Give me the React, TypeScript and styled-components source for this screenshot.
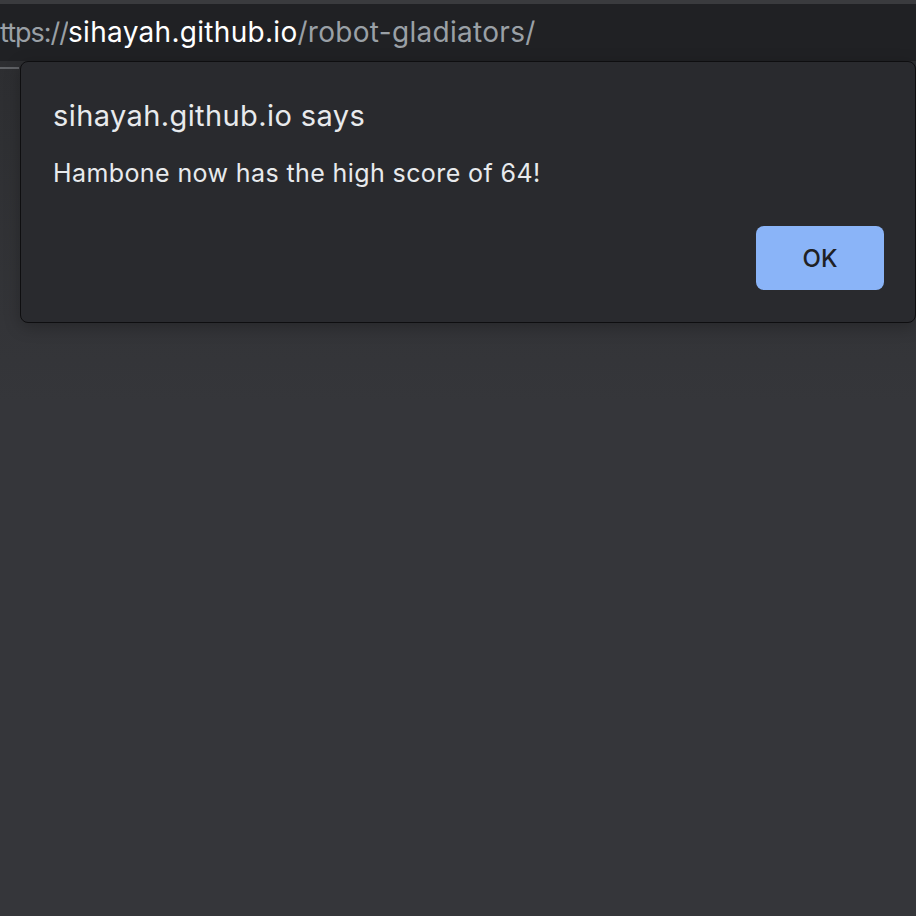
import React from 'react'
import styled, { createGlobalStyle } from 'styled-components';

const GlobalStyle = createGlobalStyle`
    html, body {
        margin: 0;
        padding: 0;
        background: #35363a;
    }
    body {
        font-family: Inter, "Noto Sans", "Liberation Sans", sans-serif;
    }
`;

const App = () => {
    return (
        <>
            <GlobalStyle />
            <Window>
                <TopStrip />
                <AddressBar>
                    <Scheme>
                        <span>https://</span>
                    </Scheme>
                    <Host>sihayah.github.io</Host>
                    <Path>/robot-gladiators/</Path>
                </AddressBar>
                <Content>
                    <TabLine />
                </Content>
                <Dialog>
                    <Title>sihayah.github.io says</Title>
                    <Message>Hambone now has the high score of 64!</Message>
                    <DialogFooter>
                        <OkButton>OK</OkButton>
                    </DialogFooter>
                </Dialog>
            </Window>
        </>
    )
}

export default App;

const Window = styled.div`
    position: relative;
    width: 916px;
    height: 916px;
    overflow: hidden;
    display: flex;
    flex-direction: column;
    background: #35363a;
`;

const TopStrip = styled.div`
    height: 4px;
    background: #3a3b3e;
`;

const AddressBar = styled.div`
    height: 57px;
    background: #202124;
    display: flex;
    align-items: center;
    overflow: hidden;
    font-size: 28px;
    letter-spacing: 0.3px;
    white-space: nowrap;
    padding-bottom: 2px;
    box-sizing: border-box;
`;

const Scheme = styled.div`
    width: 68px;
    flex: none;
    display: flex;
    justify-content: flex-end;
    overflow: hidden;
    color: #9aa0a6;
    font-size: 27px;
    letter-spacing: -1px;
    padding-top: 1px;
`;

const Host = styled.span`
    color: #ffffff;
`;

const Path = styled.span`
    color: #9aa0a6;
`;

const Content = styled.div`
    flex: 1;
    background: linear-gradient(180deg, #2d2e31 0%, #35363a 40%, #35363a 100%);
`;

const TabLine = styled.div`
    margin-top: 6px;
    width: 19px;
    height: 2px;
    background: #5f6165;
`;

const Dialog = styled.div`
    position: absolute;
    top: 61px;
    left: 20px;
    width: 896px;
    height: 262px;
    box-sizing: border-box;
    padding: 35px 31px 0 32px;
    background: #292a2e;
    border: 1px solid #0e0e10;
    border-radius: 8px;
    box-shadow: 0 4px 16px rgba(0, 0, 0, 0.25);
    display: flex;
    flex-direction: column;
`;

const Title = styled.h2`
    margin: 0;
    font-size: 29px;
    letter-spacing: 0.4px;
    font-weight: 400;
    color: #e8eaed;
    line-height: 38px;
`;

const Message = styled.p`
    margin: 23px 0 0 0;
    font-size: 25px;
    letter-spacing: 0.4px;
    color: #e8eaed;
    line-height: 30px;
`;

const DialogFooter = styled.div`
    display: flex;
    justify-content: flex-end;
    margin-top: 38px;
`;

const OkButton = styled.button`
    width: 128px;
    height: 64px;
    background: #8ab4f8;
    color: #202124;
    border: none;
    border-radius: 8px;
    font-family: Inter, "Noto Sans", sans-serif;
    font-size: 24px;
    font-weight: 500;
    cursor: pointer;
`;
